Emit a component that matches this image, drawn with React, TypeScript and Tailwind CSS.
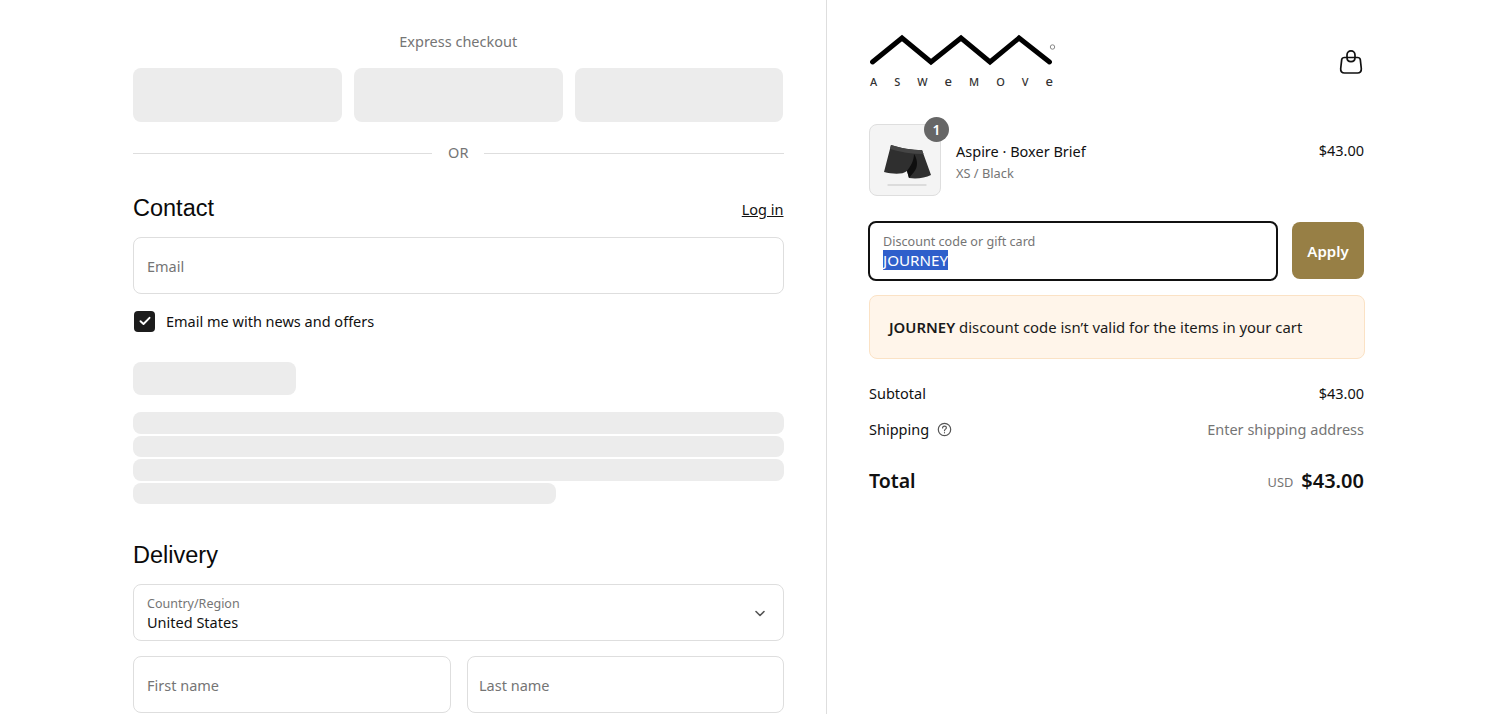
import React from "react";

const Skeleton = ({ className }: { className: string }) => <div className={`bg-[#ececec] ${className}`} />;

function Logo() {
  return (
    <div className="w-[187px] h-[54px] flex flex-col">
      <svg width="187" height="32" viewBox="0 0 187 32" fill="none" className="block">
        <path d="M3.5 28 L33 4 L62 28 L92 4 L121 28 L150 4 L180.5 28" stroke="#000" strokeWidth="4.9" strokeLinecap="round" strokeLinejoin="miter" />
        <circle cx="183.5" cy="13" r="2.2" stroke="#888" strokeWidth="1" />
      </svg>
      <div className="mt-[9px] flex justify-between items-center w-[184px] pl-[1px] text-[11px] font-medium leading-[13px] text-[#333] font-['Noto_Sans',sans-serif]">
        <span>A</span><span>S</span><span>W</span><span className="text-[13px]">e</span><span>M</span><span>O</span><span>V</span><span className="text-[13px]">e</span>
      </div>
    </div>
  );
}

function Bag() {
  return (
    <svg width="24" height="26" viewBox="0 0 24 26" fill="none" stroke="#111" strokeWidth="1.7" strokeLinecap="round" strokeLinejoin="round">
      <path d="M5.5 8.5 H18.5 C20 8.5 21 9.2 21.3 10.6 L22.3 19.5 C22.6 22.5 21 24 18.5 24 H5.5 C3 24 1.4 22.5 1.7 19.5 L2.7 10.6 C3 9.2 4 8.5 5.5 8.5 Z" />
      <path d="M8 8.5 V6 C8 3.6 9.7 1.8 12 1.8 C14.3 1.8 16 3.6 16 6 V8.5 C16 11 14.3 12.6 12 12.6 C9.7 12.6 8 11 8 8.5 Z" />
    </svg>
  );
}

function Boxer() {
  return (
    <svg width="70" height="70" viewBox="0 0 70 70">
      <path d="M18 60 H56" stroke="#d4d4d4" strokeWidth="1.4" strokeLinecap="round" />
      <path d="M21 20 C30 23 42 25 52 25 L61 50 C55 53 47 54 39 53 L37 46 C32 50 22 49 14 47 Z" fill="#2f2f2f" />
      <path d="M21 20 C30 23 42 25 52 25 L53.5 29 C42 29 30 27 20 24 Z" fill="#454545" />
      <path d="M44 29 C48 35 48 42 44 47 L39 53 L37 46 C41 41 44 35 44 29 Z" fill="#0f0f0f" />
    </svg>
  );
}

function Field({ label, value, className }: { label?: string; value?: string; className: string }) {
  return (
    <div className={`h-[57px] rounded-[8px] border border-[#dedede] bg-white flex flex-col justify-center ${value ? "pt-[2px]" : ""} ${className}`}>
      {value ? (
        <>
          <span className="text-[12.5px] leading-[16px] text-[#757575]">{label}</span>
          <span className="text-[14.5px] leading-[20px] text-[#111]">{value}</span>
        </>
      ) : (
        <span className="text-[14.5px] leading-[20px] text-[#757575]">{label}</span>
      )}
    </div>
  );
}

export default function App() {
  return (
    <div className="flex h-[714px] w-[1500px] overflow-hidden bg-white text-[#111] font-['Noto_Sans','Open_Sans',sans-serif] text-[14.5px]">
      <main className="w-[827px] shrink-0 border-r border-[#dedede] pl-[133px] pr-[42.5px]">
        <div className="pt-[31px] text-center leading-[20px] text-[#757575]">Express checkout</div>
        <div className="mt-[17px] grid grid-cols-3 gap-[12px]">
          <Skeleton className="h-[54px] rounded-[8px]" />
          <Skeleton className="h-[54px] rounded-[8px]" />
          <Skeleton className="h-[54px] rounded-[8px]" />
        </div>
        <div className="mt-[21px] flex items-center gap-[16px] h-[20px]">
          <div className="h-px flex-1 bg-[#dedede]" />
          <span className="text-[#757575] leading-[20px] mb-[2px]">OR</span>
          <div className="h-px flex-1 bg-[#dedede]" />
        </div>
        <div className="mt-[29px] flex items-end justify-between h-[32px]">
          <h2 className="text-[23.5px] leading-[32px] font-['Liberation_Sans',sans-serif] text-[#0a0a0a]">Contact</h2>
          <a className="underline leading-[20px] text-[#111] mb-[5px]">Log in</a>
        </div>
        <Field label="Email" className="mt-[13px] pl-[13px]" />
        <div className="mt-[16px] flex items-center gap-[11px] h-[22px] pl-[1px]">
          <div className="w-[21px] h-[21px] rounded-[4px] bg-[#1c1c1c] flex items-center justify-center">
            <svg width="12" height="10" viewBox="0 0 12 10" fill="none" stroke="#fff" strokeWidth="1.9" strokeLinecap="round" strokeLinejoin="round">
              <path d="M1.5 5.2 L4.5 8 L10.5 1.8" />
            </svg>
          </div>
          <span className="leading-[20px]">Email me with news and offers</span>
        </div>
        <Skeleton className="mt-[30px] h-[33px] w-[163px] rounded-[8px]" />
        <div className="mt-[17px] flex flex-col gap-[2px]">
          <Skeleton className="h-[21.5px] rounded-[8px]" />
          <Skeleton className="h-[21.5px] rounded-[8px]" />
          <Skeleton className="h-[21.5px] rounded-[8px]" />
          <Skeleton className="h-[21.5px] w-[423px] rounded-[8px]" />
        </div>
        <h2 className="mt-[35px] text-[23.5px] leading-[32px] font-['Liberation_Sans',sans-serif] text-[#0a0a0a]">Delivery</h2>
        <div className="mt-[13px] relative">
          <Field label="Country/Region" value="United States" className="pl-[13px]" />
          <svg className="absolute right-[18px] top-[25px]" width="12" height="9" viewBox="0 0 12 9" fill="none" stroke="#555" strokeWidth="1.6" strokeLinecap="round" strokeLinejoin="round">
            <path d="M2 2.5 L6 6.5 L10 2.5" />
          </svg>
        </div>
        <div className="mt-[15px] flex gap-[16px]">
          <Field label="First name" className="w-[318px] pl-[13px]" />
          <Field label="Last name" className="flex-1 pl-[11px]" />
        </div>
      </main>
      <aside className="w-[538px] shrink-0 pl-[42px]">
        <div className="w-[495px] pt-[34px] flex items-start justify-between">
          <Logo />
          <div className="mt-[15px] mr-[1px]"><Bag /></div>
        </div>
        <div className="mt-[36px] w-[495px] flex items-center">
          <div className="relative w-[72px] h-[72px] rounded-[8px] border border-[#dedede] bg-[#f4f4f4] flex items-center justify-center">
            <Boxer />
            <div className="absolute -right-[9px] -top-[8px] w-[25px] h-[25px] rounded-full bg-[#666] text-white text-[14px] font-semibold flex items-center justify-center">1</div>
          </div>
          <div className="ml-[15px] flex-1 pt-[2px]">
            <div className="leading-[20px] text-[#111]">Aspire · Boxer Brief</div>
            <div className="mt-[4px] text-[12.8px] leading-[16px] text-[#757575]">XS / Black</div>
          </div>
          <div className="mb-[20px] leading-[20px]">$43.00</div>
        </div>
        <div className="mt-[25px] w-[497px] -ml-[1px] flex items-start gap-[14px]">
          <div className="h-[60px] w-[410px] rounded-[8px] border-2 border-[#111] flex flex-col justify-center pt-[2px] px-[13px]">
            <span className="text-[12.6px] leading-[16px] text-[#757575]">Discount code or gift card</span>
            <span className="leading-[20px] text-[15.2px]"><span className="bg-[#2f5fcb] text-white">JOURNEY</span></span>
          </div>
          <button className="mt-[1px] pt-[2px] h-[57px] w-[72px] rounded-[8px] bg-[#977f45] text-white font-semibold text-[15px]">Apply</button>
        </div>
        <div className="mt-[14px] h-[64px] w-[496px] rounded-[8px] border border-[#fbe2c5] bg-[#fff5ea] flex items-center px-[19px] text-[#1a1a1a] leading-[20px] text-[14.9px]">
          <span><span className="font-semibold">JOURNEY</span> discount code isn’t valid for the items in your cart</span>
        </div>
        <div className="mt-[24px] w-[495px] flex justify-between leading-[20px]">
          <span>Subtotal</span><span>$43.00</span>
        </div>
        <div className="mt-[16px] w-[495px] flex justify-between leading-[20px]">
          <span className="flex items-center gap-[8px]">
            Shipping
            <svg width="15" height="15" viewBox="0 0 15 15" fill="none" stroke="#555" strokeWidth="1.2" strokeLinecap="round">
              <circle cx="7.5" cy="7.5" r="6.2" />
              <path d="M5.6 6 C5.6 4.8 6.4 4.1 7.5 4.1 C8.6 4.1 9.4 4.8 9.4 5.8 C9.4 7.2 7.5 7.1 7.5 8.7" />
              <path d="M7.5 10.7 V10.8" />
            </svg>
          </span>
          <span className="text-[#757575]">Enter shipping address</span>
        </div>
        <div className="mt-[28px] w-[495px] flex justify-between items-center h-[28px]">
          <span className="text-[19.5px] font-semibold leading-[28px]">Total</span>
          <span className="flex items-center gap-[8px]">
            <span className="text-[12.8px] text-[#757575] mt-[4px]">USD</span>
            <span className="text-[20px] font-semibold leading-[28px]">$43.00</span>
          </span>
        </div>
      </aside>
    </div>
  );
}
